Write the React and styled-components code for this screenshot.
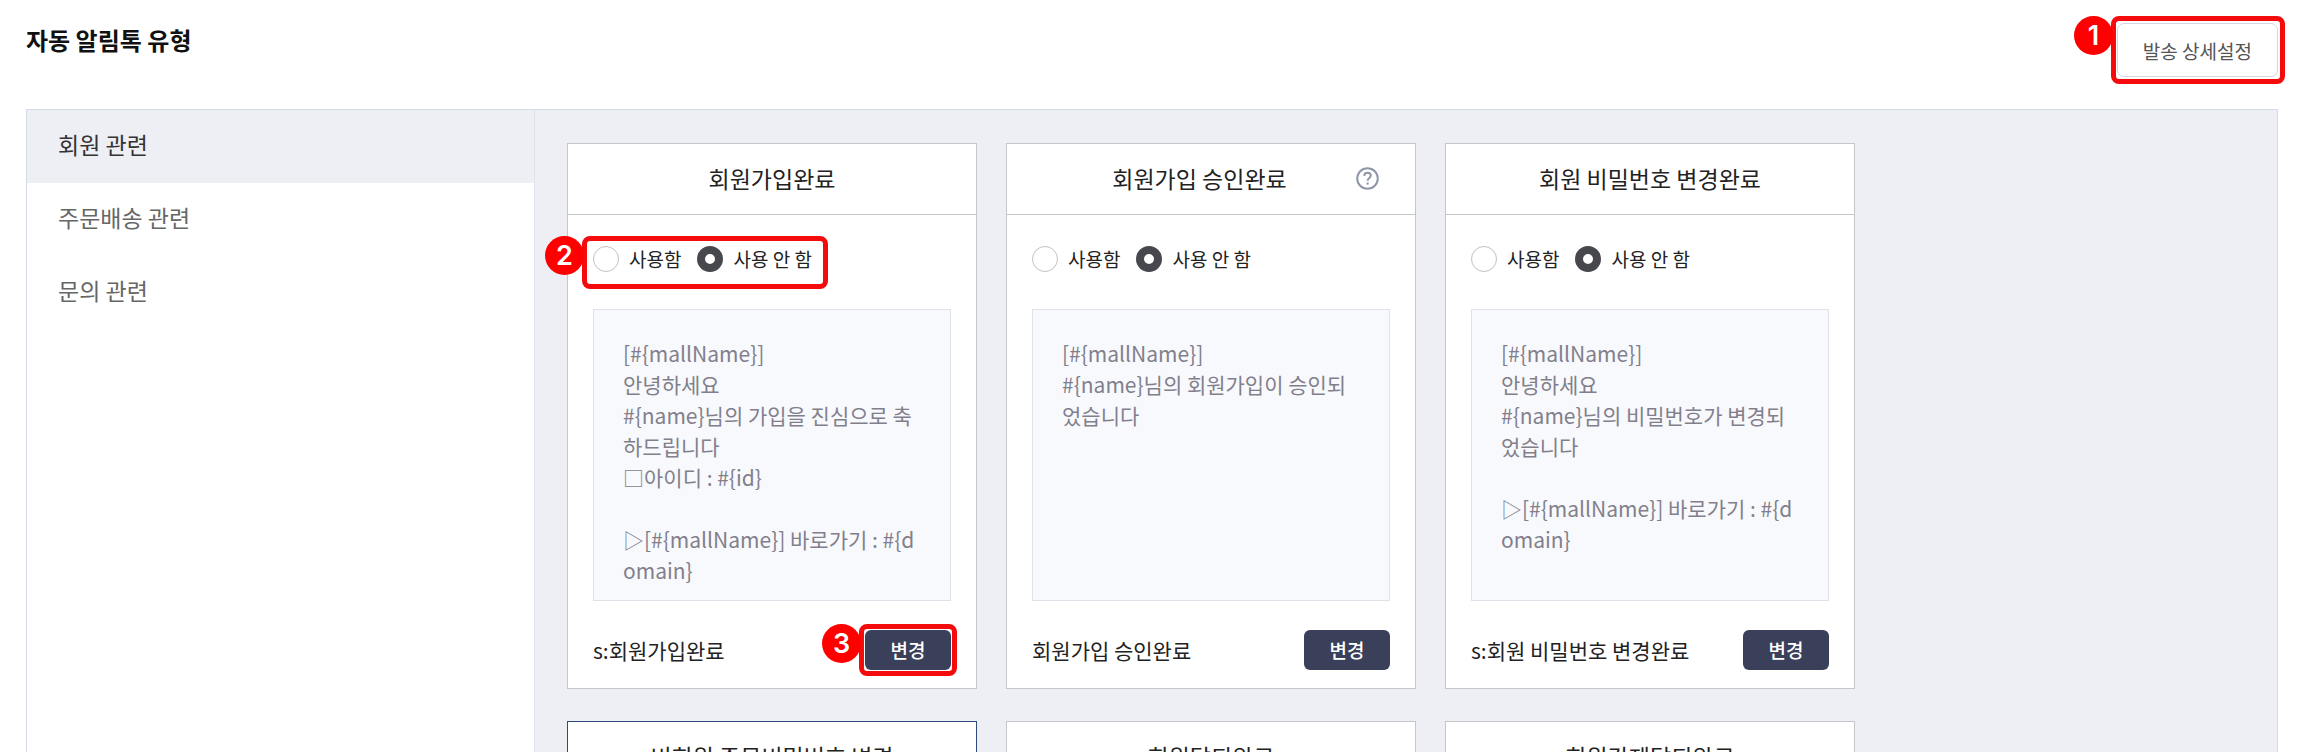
import React, { useState } from 'react';
import styled, { createGlobalStyle } from 'styled-components';

const GlobalStyle = createGlobalStyle`
  * {
    box-sizing: border-box;
  }

  body {
    margin: 0;
    background: white;
    color: #222;
    font-family: 'Noto Sans CJK KR', 'Noto Sans', sans-serif;
  }

  button {
    font-family: inherit;
    cursor: pointer;
  }
`;

const StyledPage = styled.div`
  display: flex;
  flex-direction: column;
  height: 100vh;
  padding: 23px 26px 0;
  overflow: hidden;
`;

const StyledHeader = styled.header`
  display: flex;
  justify-content: space-between;
  align-items: flex-start;
  margin-bottom: 32px;
`;

const StyledPageTitle = styled.h1`
  margin: 0;
  font-size: 24px;
  line-height: 34px;
  font-weight: 700;
  color: #111;
`;

const StyledSettingsButton = styled.button`
  display: block;
  height: 54px;
  padding: 2px 25px 0;
  background: white;
  border: 1px solid #d3d6e2;
  border-radius: 7px;
  font-size: 19px;
  line-height: 28px;
  color: #555;
`;

const StyledPanel = styled.div`
  display: flex;
  flex: 1;
  min-height: 0;
  overflow: hidden;
  border: 1px solid #d5dbe6;
  border-bottom: 0;
  background: #eeeff5;
`;

const StyledSidebar = styled.nav`
  flex: 0 0 508px;
  background: white;
  border-right: 1px solid #dde2ec;
`;

const StyledSidebarButton = styled.button`
  display: block;
  width: 100%;
  height: 73px;
  padding: 0 31px 6px;
  border: 0;
  background: ${({ $active }) => ($active ? '#eeeff5' : 'white')};
  color: ${({ $active }) => ($active ? '#333' : '#666')};
  font-size: 23px;
  line-height: 34px;
  text-align: left;
`;

const StyledCards = styled.main`
  flex: 1;
  display: grid;
  grid-template-columns: repeat(auto-fill, 410px);
  grid-auto-rows: max-content;
  gap: 32px 29px;
  align-content: start;
  padding: 33px 32px;
`;

const StyledCard = styled.section`
  min-height: 240px;
  background: white;
  border: 1px solid ${({ $selected }) => ($selected ? '#2f4a7d' : '#c5c6c9')};
`;

const StyledCardHeader = styled.div`
  display: flex;
  align-items: center;
  height: 71px;
  padding: 0 36px 2px;
  border-bottom: 1px solid #c5c6c9;
`;

const StyledCardTitle = styled.h2`
  flex: 1;
  margin: 0;
  font-size: 23px;
  line-height: 34px;
  font-weight: 400;
  text-align: center;
  white-space: nowrap;
`;

const StyledHelpButton = styled.button`
  display: block;
  width: 23px;
  height: 23px;
  padding: 0;
  border: 0;
  background: none;
  color: #8e96a8;

  svg {
    display: block;
  }
`;

const StyledCardBody = styled.div`
  padding: 31px 25px 18px;
`;

const StyledTarget = styled.div`
  position: relative;
  width: fit-content;
`;

const StyledOutline = styled.div`
  position: absolute;
  inset: ${({ $inset }) => $inset};
  border: 5px solid #f40b0b;
  border-radius: 8px;
  pointer-events: none;
`;

const StyledBadge = styled.span`
  position: absolute;
  top: -5px;
  left: -42px;
  width: 39px;
  height: 39px;
  border-radius: 50%;
  background: #ff0000;
  color: white;
  font-family: Inter, sans-serif;
  font-size: 27px;
  line-height: 39px;
  font-weight: 600;
  text-align: center;
`;

const StyledRadioGroup = styled.div`
  display: flex;
  gap: 16px;
  height: 26px;
`;

const StyledRadioLabel = styled.label`
  display: flex;
  align-items: center;
  gap: 10px;
  font-size: 19px;
  line-height: 28px;
  white-space: nowrap;
`;

const StyledRadio = styled.input`
  appearance: none;
  flex: none;
  width: 26px;
  height: 26px;
  margin: 0;
  border: 1px solid #c2c2c2;
  border-radius: 50%;
  background: white;

  &:checked {
    border: 8px solid #46484d;
  }
`;

const StyledMessage = styled.div`
  height: 292px;
  margin: 37px 0 29px;
  padding: 28px 29px;
  border: 1px solid #dfe3e9;
  background: #f8f9fc;
  color: #827f8c;
  font-size: 21px;
  line-height: 31px;
  white-space: pre-wrap;
  word-break: break-all;
`;

const StyledCardFooter = styled.div`
  display: flex;
  justify-content: space-between;
  align-items: center;
  font-size: 21px;
  line-height: 31px;
`;

const StyledChangeButton = styled.button`
  display: block;
  width: 86px;
  height: 40px;
  padding: 0;
  border: 0;
  border-radius: 6px;
  background: #3a405a;
  color: white;
  font-size: 19px;
  line-height: 28px;
  font-weight: 500;
`;

const menu = ['회원 관련', '주문배송 관련', '문의 관련'];

const cards = [
  {
    id: 'join',
    title: '회원가입완료',
    template: 's:회원가입완료',
    message:
      '[#{mallName}]\n안녕하세요\n#{name}님의 가입을 진심으로 축하드립니다\n□아이디 : #{id}\n\n▷[#{mallName}] 바로가기 : #{domain}',
    radioStep: 2,
    buttonStep: 3,
  },
  {
    id: 'approve',
    title: '회원가입 승인완료',
    template: '회원가입 승인완료',
    message: '[#{mallName}]\n#{name}님의 회원가입이 승인되었습니다',
    help: true,
  },
  {
    id: 'password',
    title: '회원 비밀번호 변경완료',
    template: 's:회원 비밀번호 변경완료',
    message:
      '[#{mallName}]\n안녕하세요\n#{name}님의 비밀번호가 변경되었습니다\n\n▷[#{mallName}] 바로가기 : #{domain}',
  },
  { id: 'guest', title: '비회원 주문비밀번호 변경', selected: true },
  { id: 'leave', title: '회원탈퇴완료' },
  { id: 'expel', title: '회원강제탈퇴완료' },
];

const HelpIcon = () => (
  <svg width="23" height="23" viewBox="0 0 23 23" fill="none" stroke="currentColor" strokeWidth="2">
    <circle cx="11.5" cy="11.5" r="10.3" />
    <path d="M8.2 8.9c.1-2 1.4-3.1 3.3-3.1 2 0 3.3 1.1 3.3 2.8 0 2.4-3.2 2.4-3.2 5.2" />
    <path d="M11.6 15.4v2.2" />
  </svg>
);

const Callout = ({ step, inset, children }) => (
  <StyledTarget>
    {children}
    {step && (
      <StyledOutline $inset={inset}>
        <StyledBadge>{step}</StyledBadge>
      </StyledOutline>
    )}
  </StyledTarget>
);

const TemplateCard = ({ id, title, template, message, help, selected, radioStep, buttonStep }) => {
  const [used, setUsed] = useState(false);

  return (
    <StyledCard $selected={selected}>
      <StyledCardHeader>
        <StyledCardTitle>{title}</StyledCardTitle>
        {help && (
          <StyledHelpButton type="button" aria-label="도움말">
            <HelpIcon />
          </StyledHelpButton>
        )}
      </StyledCardHeader>
      {message && (
        <StyledCardBody>
          <Callout step={radioStep} inset="-10px -16px -17px -11px">
            <StyledRadioGroup>
              <StyledRadioLabel>
                <StyledRadio type="radio" name={id} checked={used} onChange={() => setUsed(true)} />
                사용함
              </StyledRadioLabel>
              <StyledRadioLabel>
                <StyledRadio type="radio" name={id} checked={!used} onChange={() => setUsed(false)} />
                사용 안 함
              </StyledRadioLabel>
            </StyledRadioGroup>
          </Callout>
          <StyledMessage>{message}</StyledMessage>
          <StyledCardFooter>
            <span>{template}</span>
            <Callout step={buttonStep} inset="-6px">
              <StyledChangeButton type="button">변경</StyledChangeButton>
            </Callout>
          </StyledCardFooter>
        </StyledCardBody>
      )}
    </StyledCard>
  );
};

const App = () => {
  const [active, setActive] = useState(menu[0]);

  return (
    <StyledPage>
      <GlobalStyle />
      <StyledHeader>
        <StyledPageTitle>자동 알림톡 유형</StyledPageTitle>
        <Callout step={1} inset="-7px -7px -7px -6px">
          <StyledSettingsButton type="button">발송 상세설정</StyledSettingsButton>
        </Callout>
      </StyledHeader>
      <StyledPanel>
        <StyledSidebar>
          {menu.map((item) => (
            <StyledSidebarButton
              key={item}
              type="button"
              $active={item === active}
              onClick={() => setActive(item)}
            >
              {item}
            </StyledSidebarButton>
          ))}
        </StyledSidebar>
        <StyledCards>
          {cards.map((card) => (
            <TemplateCard key={card.id} {...card} />
          ))}
        </StyledCards>
      </StyledPanel>
    </StyledPage>
  );
};

export default App;
